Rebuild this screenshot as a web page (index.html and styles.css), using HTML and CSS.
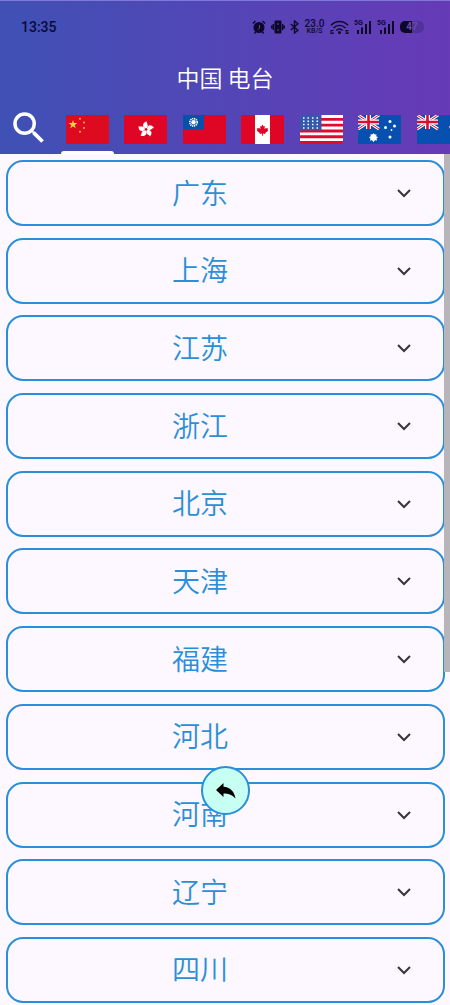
FILE: index.html
```html
<!DOCTYPE html>
<html lang="zh-CN">
<head>
<meta charset="utf-8">
<meta name="viewport" content="width=device-width, initial-scale=1">
<title>中国 电台</title>
<link rel="stylesheet" href="styles.css">
</head>
<body>
<header class="app-bar">
  <div class="status">
    <time class="clock">13:35</time>
    <div class="indicators">
      <svg width="14" height="14" viewBox="0 0 14 14"><circle cx="7" cy="7.500" r="5.500"/><path class="line" d="M.8 3.400 3.500 1M13.200 3.400 10.500 1M3.500 12 2.500 13.500M10.500 12 11.500 13.500"/><path class="cut" d="M7.500 5v3L6 9.500"/></svg>
      <svg width="14" height="14" viewBox="0 0 14 14"><rect x="3.500" y=".5" width="7" height="13" rx="1"/><path class="line" d="M2.300 4v6M11.700 4v6M.7 5.500v3M13.300 5.500v3"/><path class="cut" d="M6 4h2M6 10h2"/></svg>
      <svg width="9" height="14" viewBox="0 0 9 14"><path class="line" d="M.8 4 8 10.200 4.500 13V1L8 3.800.8 10"/></svg>
      <div class="speed"><span class="rate">23.0</span><span class="unit">KB/S</span></div>
      <svg width="19" height="14" viewBox="0 0 19 14"><path class="line" d="M1 5.200c5-4.900 12-4.900 17 0M3.500 8c3.600-3.500 8.400-3.500 12 0M6.300 10.500c2-1.800 4.400-1.800 6.400 0"/><circle cx="9.500" cy="12.400" r="1.500"/><path d="M.5 10h3v1h-2v2h1v-1h1v2h-3zM15.500 10h3v1h-2v.7h2V14h-3v-1h2v-.5h-2z"/></svg>
      <div class="signal"><span class="net">5G</span><svg width="18" height="14" viewBox="0 0 18 14"><path d="M3 10h2v4H3zM7 7.500h2V14H7zM11 4h2v10h-2zM15 1h2v13h-2z"/></svg></div>
      <div class="signal"><span class="net">5G</span><svg width="18" height="14" viewBox="0 0 18 14"><path d="M3 10h2v4H3zM7 7.500h2V14H7zM11 4h2v10h-2zM15 1h2v13h-2z"/></svg></div>
      <div class="battery">47</div>
    </div>
  </div>
  <h1 class="title">中国 电台</h1>
  <nav class="tabs">
    <button class="search" aria-label="搜索"><svg width="42" height="42" viewBox="0 0 24 24"><path d="M15.500 14h-.79l-.28-.27A6.470 6.470 0 0 0 16 9.500 6.500 6.500 0 1 0 9.500 16c1.610 0 3.090-.59 4.230-1.570l.27.28v.79l5 4.990L20.490 19zm-6 0A4.500 4.500 0 1 1 9.500 5a4.500 4.500 0 0 1 0 9z"/></svg></button>
    <button class="tab active" aria-label="中国"><svg class="flag" viewBox="0 0 43 29"><path fill="#de0a20" d="M0 0h43v29H0z"/><path fill="#ffdc32" d="m7 5 1 3h3.400l-2.700 2 1 3.300L7 11.300l-2.700 2 1-3.300-2.700-2H6z"/><g fill="#ffb84a"><circle cx="14" cy="3.700" r="1"/><circle cx="18" cy="7.500" r="1"/><circle cx="18" cy="13" r="1"/><circle cx="14" cy="16.700" r="1"/></g></svg></button>
    <button class="tab" aria-label="香港"><svg class="flag" viewBox="0 0 43 29"><path fill="#de0624" d="M0 0h43v29H0z"/><defs><path id="petal" d="M0-1C-5-3-3-7.500 1-8 0-6 4-4 0-1z"/></defs><g fill="#fff" transform="translate(22 14.500)"><use href="#petal"/><use href="#petal" transform="rotate(72)"/><use href="#petal" transform="rotate(144)"/><use href="#petal" transform="rotate(216)"/><use href="#petal" transform="rotate(288)"/></g></svg></button>
    <button class="tab" aria-label="台湾"><svg class="flag" viewBox="0 0 43 29"><path fill="#de0624" d="M0 0h43v29H0z"/><path fill="#0850a8" d="M0 0h21v14.500H0z"/><circle cx="10.500" cy="7.300" r="3.700" fill="none" stroke="#fff" stroke-width="1.600" stroke-dasharray="1.300 .64"/><circle cx="10.500" cy="7.300" r="2.200" fill="#fff"/></svg></button>
    <button class="tab" aria-label="加拿大"><svg class="flag" viewBox="0 0 43 29"><path fill="#de0624" d="M0 0h43v29H0z"/><path fill="#fff" d="M14 0h15v29H14z"/><path fill="#de0624" transform="translate(3.200 2.200) scale(.85)" d="m21.500 8.500 1.300 2.500 1.500-.7-.5 3.500 2-1.500.5 1 2-.2-.8 2 .8.700-3.600 2.700.3 1.200-3-.4v2.500h-1v-2.500l-3 .4.300-1.200-3.600-2.700.8-.7-.8-2 2 .2.500-1 2 1.500-.5-3.500 1.500.7z"/></svg></button>
    <button class="tab" aria-label="美国"><svg class="flag" viewBox="0 0 43 29"><path fill="#fff" d="M0 0h43v29H0z"/><path stroke="#de0a30" stroke-width="2.900" d="M0 4.350h43M0 10.150h43M0 15.950h43M0 21.750h43M0 27.550h43"/><path fill="#3558ad" d="M0 0h21.500v15.400H0z"/><path stroke="#fff" stroke-width="1.500" stroke-dasharray="1.500 3" d="M3 3h17M3 6.300h17M3 9.600h17M3 12.900h17"/></svg></button>
    <button class="tab" aria-label="澳大利亚"><svg class="flag" viewBox="0 0 43 29"><defs><g id="jack"><path fill="#0850b0" d="M0 0h21v14H0z"/><path stroke="#fff" stroke-width="3" d="m0 0 21 14M21 0 0 14"/><path stroke="#de0a30" stroke-width="1" d="m0 0 21 14M21 0 0 14"/><path stroke="#fff" stroke-width="5" d="M10.500 0v14M0 7h21"/><path stroke="#de0a30" stroke-width="2.600" d="M10.500 0v14M0 7h21"/></g></defs><path fill="#0850b0" d="M0 0h43v29H0z"/><use href="#jack"/><g fill="#fff"><circle cx="15.500" cy="21.700" r="2.600"/><path d="m15.500 18 1 1.800 2-.5-.3 2 1.800.9-1.500 1.300.6 1.900-2.100-.1-1.500 1.700-1.500-1.700-2.100.1.600-1.900-1.500-1.300 1.800-.9-.3-2 2 .5z"/><circle cx="32" cy="6.500" r="1.500"/><circle cx="27.500" cy="12.500" r="1.500"/><circle cx="36.500" cy="11" r="1.500"/><circle cx="33.500" cy="15" r=".9"/><circle cx="32" cy="22" r="1.500"/></g></svg></button>
    <button class="tab" aria-label="新西兰"><svg class="flag" viewBox="0 0 43 29"><path fill="#0850b0" d="M0 0h43v29H0z"/><use href="#jack"/><g fill="#de0a30" stroke="#fff" stroke-width=".5"><circle cx="33.500" cy="12" r="1.200"/><circle cx="37" cy="7" r="1.500"/><circle cx="37" cy="22" r="1.500"/></g></svg></button>
  </nav>
</header>
<main class="regions">
  <button class="region"><span class="name">广东</span><svg class="chevron" viewBox="0 0 24 24"><path d="m6 9 6 6 6-6"/></svg></button>
  <button class="region"><span class="name">上海</span><svg class="chevron" viewBox="0 0 24 24"><path d="m6 9 6 6 6-6"/></svg></button>
  <button class="region"><span class="name">江苏</span><svg class="chevron" viewBox="0 0 24 24"><path d="m6 9 6 6 6-6"/></svg></button>
  <button class="region"><span class="name">浙江</span><svg class="chevron" viewBox="0 0 24 24"><path d="m6 9 6 6 6-6"/></svg></button>
  <button class="region"><span class="name">北京</span><svg class="chevron" viewBox="0 0 24 24"><path d="m6 9 6 6 6-6"/></svg></button>
  <button class="region"><span class="name">天津</span><svg class="chevron" viewBox="0 0 24 24"><path d="m6 9 6 6 6-6"/></svg></button>
  <button class="region"><span class="name">福建</span><svg class="chevron" viewBox="0 0 24 24"><path d="m6 9 6 6 6-6"/></svg></button>
  <button class="region"><span class="name">河北</span><svg class="chevron" viewBox="0 0 24 24"><path d="m6 9 6 6 6-6"/></svg></button>
  <button class="region"><span class="name">河南</span><svg class="chevron" viewBox="0 0 24 24"><path d="m6 9 6 6 6-6"/></svg></button>
  <button class="region"><span class="name">辽宁</span><svg class="chevron" viewBox="0 0 24 24"><path d="m6 9 6 6 6-6"/></svg></button>
  <button class="region"><span class="name">四川</span><svg class="chevron" viewBox="0 0 24 24"><path d="m6 9 6 6 6-6"/></svg></button>
</main>
<div class="scroll-thumb"></div>
<button class="back" aria-label="返回"><svg width="20" height="16" viewBox="0 0 20 16"><path d="M0 7 7.500 0v3.700C14 4 18.500 8.500 19.500 15.500 16 11.500 12 10.500 7.500 10.500V14z"/></svg></button>
</body>
</html>
```
FILE: styles.css
```css
* {
  box-sizing: border-box;
}

body {
  margin: 0;
  min-height: 100vh;
  display: flex;
  flex-direction: column;
  overflow-x: hidden;
  background: #fdf7ff;
  font-family: "Noto Sans CJK SC", sans-serif;
}

button {
  margin: 0;
  padding: 0;
  border: 0;
  background: none;
  font: inherit;
  cursor: pointer;
}

svg {
  display: block;
  flex: none;
}

.app-bar {
  background: linear-gradient(to right, #3f51b5, #673ab7);
  border-top: 1px solid #8078d8;
}

.status {
  display: flex;
  align-items: center;
  justify-content: space-between;
  height: 52px;
  padding: 0 26px 0 21px;
  color: #0b0938;
  font-family: Roboto, sans-serif;
}

.clock {
  font-size: 14px;
  font-weight: 500;
}

.indicators {
  display: flex;
  align-items: center;
  gap: 5px;
  fill: #0d0828;
}

.line {
  fill: none;
  stroke: #0d0828;
  stroke-width: 1.4;
}

.cut {
  fill: none;
  stroke: #5b42b4;
}

.speed {
  display: flex;
  flex-direction: column;
  align-items: center;
  width: 21px;
  font-weight: 500;
}

.rate {
  font-size: 10px;
  line-height: 8px;
}

.unit {
  font-size: 7px;
  line-height: 7px;
}

.signal {
  position: relative;
}

.net {
  position: absolute;
  top: 0;
  left: 0;
  font-size: 7px;
  font-weight: 700;
  line-height: 7px;
}

.battery {
  width: 24px;
  height: 12px;
  border-radius: 5px;
  background: linear-gradient(to right, #0d0828 50%, #50329a 50%);
  color: #6a48b2;
  font-size: 10px;
  font-weight: 700;
  line-height: 12px;
  text-align: center;
}

.title {
  margin: 0;
  padding-bottom: 4px;
  color: #fff;
  font-size: 23px;
  font-weight: 350;
  line-height: 48px;
  text-align: center;
}

.tabs {
  display: flex;
  height: 49px;
  padding-left: 8px;
  overflow: hidden;
}

.search {
  width: 50px;
  height: 46px;
  flex: none;
  fill: #fff;
}

.tab {
  display: flex;
  flex-direction: column;
  align-items: center;
  justify-content: space-between;
  flex: 0 0 13vw;
  padding: 10px 3px 0;
}

.flag {
  width: 43px;
  height: 29px;
}

.tab.active::after {
  content: "";
  width: 100%;
  height: 3px;
  border-radius: 3px 3px 0 0;
  background: #fff;
}

.regions {
  flex: 1;
  display: flex;
  flex-direction: column;
  justify-content: space-between;
  gap: 8px;
  padding: 6px 5px 2px 6px;
}

.region {
  display: flex;
  align-items: center;
  height: 66px;
  flex: none;
  padding-right: 27px;
  border: 2px solid #2a8fd8;
  border-radius: 17px;
  color: #2a8fd8;
}

.name {
  flex: 1;
  padding-bottom: 3px;
  font-size: 28px;
  font-weight: 350;
  line-height: 40px;
  text-align: center;
}

.chevron {
  width: 24px;
  height: 24px;
  fill: none;
  stroke: #39343f;
  stroke-width: 2;
}

.scroll-thumb {
  position: fixed;
  top: 154px;
  right: 0;
  width: 6px;
  height: 518px;
  background: #b8b5ba;
}

.back {
  position: fixed;
  bottom: 190px;
  left: calc(50% - 24px);
  display: flex;
  align-items: center;
  justify-content: center;
  width: 49px;
  height: 49px;
  border: 2px solid #2a8fd8;
  border-radius: 50%;
  background: #c8fff3;
}
```
